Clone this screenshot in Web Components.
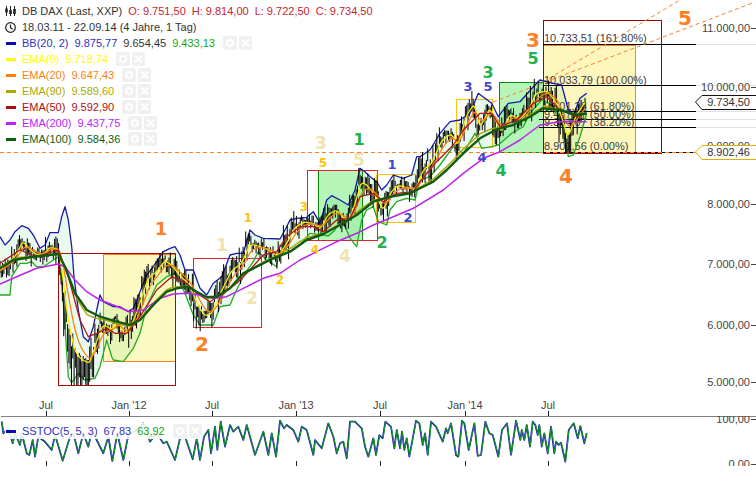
<!DOCTYPE html>
<html><head><meta charset="utf-8"><title>DB DAX</title>
<style>html,body{margin:0;background:#fff}</style></head><body>
<stock-chart></stock-chart>
<script>
const FONT='"Liberation Sans",Arial,sans-serif';
const T=(ox,oy,a)=>{const o=[];for(let i=0;i<a.length;i+=2)o.push([ox+a[i]/3,oy+a[i+1]/3]);return o};
const resample=(p,s)=>{const o=[];let j=0;for(let x=p[0][0];x<=p[p.length-1][0];x+=s){while(j<p.length-2&&p[j+1][0]<x)j++;const a=p[j],b=p[j+1],t=(x-a[0])/((b[0]-a[0])||1);o.push([x,a[1]+(b[1]-a[1])*t])}return o};
const ema=(p,n)=>{const k=2/(n+1);let v=p[0][1];return p.map(q=>{v=q[1]*k+v*(1-k);return[q[0],v]})};
const d=p=>'M'+p.map(q=>q[0].toFixed(1)+' '+q[1].toFixed(1)).join('L');

const price=[...T(0,160,[0,330,20,305,40,290,65,240,85,270,105,285,125,285,145,260,175,270,185,370,200,490,220,580,240,600,265,610,285,540,305,490,330,510,350,480,370,530,400,470,420,410,440,350,465,335,490,300,515,320,535,350,560,370,590,440,610,470,630,460,660,390,690,330,720,310,745,250,775,260,800,270,830,290]),
...T(280,130,[20,330,40,290,70,275,90,280,120,295,140,250,165,240,200,280,220,220,240,150,260,170,290,210,305,245,330,180,350,165,380,175,405,175,425,115]),
...T(420,70,[0,300,30,280,60,210,90,190,110,230,135,130,160,100,175,180,205,110,225,160,240,190,265,130,295,150,325,110,345,65,380,65,410,110,440,210,460,140,480,110,495,90])];
const upper=[...T(0,160,[0,230,15,255,30,240,45,215,65,197,85,205,100,225,120,265,135,255,150,218,175,218,185,170,195,140,205,180,215,260,222,350,235,450,250,530,265,545,280,500,290,450,300,405,310,425,340,440,360,440,385,455,400,445,420,395,440,345,460,320,490,275,510,265,525,260,540,285,555,330,580,330,600,385,620,405,640,370,665,350,690,285,710,280,730,280,750,210,765,225,790,235,840,237]),
...T(280,130,[15,300,30,270,50,265,80,262,100,245,120,280,140,210,155,197,180,210,205,225,225,180,240,115,255,125,270,140,290,155,305,180,320,165,340,135,370,145,395,135,410,80]),
...T(420,70,[0,260,30,240,60,190,90,155,120,150,150,130,175,70,195,85,215,100,235,140,265,100,300,95,345,45,360,30,400,40,425,45,445,120,460,135,480,85,500,70])];
const lower=[...T(0,160,[0,405,30,405,35,350,60,310,80,310,95,305,110,320,130,320,175,290,185,370,195,500,205,650,215,668,235,640,255,660,285,655,300,620,320,540,335,590,340,600,370,605,400,565,420,520,440,440,470,375,500,350,525,340,555,400,580,465,600,495,640,495,660,440,690,435,705,400,735,340,760,305,775,275,800,300,830,320]),
...T(280,130,[0,345,30,365,60,345,90,310,130,315,145,318,165,300,185,265,210,325,230,350,245,270,260,240,280,230,295,275,320,285,330,240,350,215,380,205,405,210]),
...T(420,70,[0,330,30,320,60,285,100,230,130,250,165,190,185,235,215,230,235,225,275,190,310,170,330,130,365,90,395,105,425,160,445,260,460,255,480,200,500,130])];
const e100=[...T(0,160,[0,325,40,300,100,290,175,282,195,320,225,400,260,450,300,470,350,485,390,495,420,480,460,435,500,395,530,385,565,380,590,395,620,412,650,410,690,385,730,340,770,320,820,295]),
...T(280,130,[30,365,80,330,130,312,180,285,230,255,280,215,330,200,390,190]),
...T(420,70,[0,355,40,335,80,300,130,250,180,205,230,178,280,165,330,140,370,115,420,120,470,135,500,130])];
const e200=[...T(0,160,[0,372,50,350,110,325,175,312,195,320,225,360,260,395,300,420,340,435,390,455,430,450,480,415,520,402,560,400,600,405,640,415,680,410,730,385,790,355,840,340]),
...T(280,130,[60,390,110,365,170,335,230,310,280,285,340,260,400,235]),
...T(420,70,[70,360,130,310,190,265,240,245,300,210,360,165,420,155,500,155])];
const e50=[...T(0,160,[0,310,60,270,110,290,175,270,205,350,240,480,265,530,290,520,320,505,345,520,380,520,420,470,470,390,515,350,560,370,590,400,630,425,670,400,710,370,740,340,790,285,830,275]),
...T(280,130,[20,320,60,290,100,290,130,305,170,270,210,265,240,200,280,190,310,215,350,190,400,185]),
...T(420,70,[0,335,50,275,100,225,130,180,180,130,215,130,240,170,290,150,340,100,380,80,420,120,470,140,500,130])];
const P=resample(price,.65), E9=ema(P,7), E20=ema(P,20);
const R50=resample(e50,.65), R100=resample(e100,.65);
const E90=R100.map((q,i)=>[q[0],q[1]*.82+(R50[Math.min(i,R50.length-1)]||q)[1]*.18]);

let seed=7;const rnd=()=>{seed=(seed*16807)%2147483647;return seed/2147483647};
let cand='';
for(let i=0;i<P.length;i+=2){const x=P[i][0];
 const sl=Math.abs(P[Math.min(i+8,P.length-1)][1]-P[Math.max(i-8,0)][1]);
 const amp=4+Math.min(sl*.35,7);
 let c=P[i][1]+(rnd()-.5)*amp*1.8;
 let dn=amp*(.3+rnd()*1.2), up=amp*(.3+rnd());
 if(x>62&&x<95)dn+=rnd()*16+4;
 if(x>560&&x<572)dn+=rnd()*10+3;
 if(rnd()<.12)dn+=rnd()*8;
 let bot=c+dn;
 if(x>58&&x<100)bot=Math.min(bot,385);
 if(x>555&&x<575)bot=Math.min(bot,153);
 cand+=`M${x.toFixed(1)} ${(c-up).toFixed(1)}V${bot.toFixed(1)}`;}

const line=(p,c,w=1.3)=>`<path d="${d(p)}" fill="none" stroke="${c}" stroke-width="${w}" stroke-linejoin="round"/>`;
const rect=(x,y,x2,y2,s,f='none',sw=1)=>`<rect x="${x}" y="${y}" width="${x2-x}" height="${y2-y}" fill="${f}" stroke="${s}" stroke-width="${sw}"/>`;
const OR='#ff7f27',BG='#efe4b0',YL='#ffc20e',GR='#22b14c',BL='#3f48cc';
const waves=[[161,235,'1',OR,18],[202,351,'2',OR,20],[533,47,'3',OR,20],[566,183,'4',OR,20],[685,25,'5',OR,20],
[222,251,'1',BG,17],[252,304,'2',BG,17],[321,149,'3',BG,17],[345,262,'4',BG,17],[359,166,'5',BG,17],
[248,222,'1',YL,12],[280,284,'2',YL,12],[304,211,'3',YL,12],[315,254,'4',YL,12],[323,167,'5',YL,12],
[359,145,'1',GR,16],[382,248,'2',GR,16],[488,78,'3',GR,16],[501,176,'4',GR,16],[533,64,'5',GR,16],
[392,169,'1',BL,13],[408,222,'2',BL,13],[468,91,'3',BL,13],[482,162,'4',BL,13],[488,91,'5',BL,13]];
const fib=[[544,42,'10.733,51 (161.80%)'],[544,84,'10.033,79 (100.00%)'],[544,110,'9.601,28 (61.80%)'],[544,118,'9.467,67 (50.00%)'],[544,126,'9.334,07 (38.20%)'],[544,150,'8.901,56 (0.00%)']];
const yax=[['11.000,00',28],['10.000,00',87],['9.000,00',146],['8.000,00',204],['7.000,00',264],['6.000,00',325],['5.000,00',382]];
const xax=[[46,'Jul'],[129,"Jan '12"],[212,'Jul'],[296,"Jan '13"],[380,'Jul'],[465,"Jan '14"],[548,'Jul']];
const tag=(y,c,t)=>`<path d="M695.5 ${y}L702 ${y-6.5}H757V${y+7.5}H702Z" fill="#fff" stroke="${c}"/><text x="750" y="${y+4}" text-anchor="end" fill="#333" font-size="11">${t}</text>`;

class PricePane extends HTMLElement{constructor(){super();this.attachShadow({mode:'open'}).innerHTML=`
<style>:host{display:block;position:relative;height:416px;overflow:hidden}svg{display:block;font-family:${FONT}}
.legend{position:absolute;left:5px;top:3px}</style>
<svg width="756" height="416" viewBox="0 0 756 416">
${rect(103.5,254.5,175.5,361.5,OR,'#fdf9c2')}
${rect(499.5,82.5,543.5,152.5,'#0a8a0a','#b5f5b8')}
${rect(318.5,170.5,362.5,240.5,'#0a8a0a','#b5f5b8')}
${rect(543.5,45.5,635.5,152.5,OR,'#fdf6bd')}
${rect(58.5,253.5,175.5,385.5,'#aa0808')}
${rect(193.5,258.5,261.5,327.5,'#e3202c')}
${rect(307.5,170.5,377.5,240.5,'#e3202c')}
${rect(376.5,174.5,415.5,222.5,YL)}
${rect(456.5,99.5,492.5,147.5,YL)}
${rect(543.5,20.5,661.5,153.5,'#a00000')}
${[44.5,85.5,111.5,119.5,127.5,152.5].map(y=>`<line x1="${y>105&&y<130?539:543}" x2="696" y1="${y}" y2="${y}" stroke="#000"/><line x1="696" x2="756" y1="${y}" y2="${y}" stroke="#e2e2e2"/>`).join('')}
<line x1="0" x2="696" y1="152.5" y2="152.5" stroke="${OR}" stroke-dasharray="4 3"/>
<line x1="493" y1="102" x2="755" y2="2" stroke="${OR}" stroke-dasharray="4 3"/>
<line x1="543" y1="82" x2="680" y2="0" stroke="${OR}" stroke-dasharray="4 3"/>
<g font-size="11" fill="#3c3c3c">${fib.map(f=>`<text x="${f[0]}" y="${f[1]}">${f[2]}</text>`).join('')}</g>
<path d="${d(upper)}L${[...lower].reverse().map(q=>q[0].toFixed(1)+' '+q[1].toFixed(1)).join('L')}Z" fill="rgba(0,200,60,.09)"/>
${line(upper,'#1a1aaa')}${line(lower,'#22aa22')}
<path d="${cand}" stroke="#000" stroke-width="1" fill="none"/>
${line(E9,'#ffee00')}${line(E20,'#ff7f11')}${line(E90,'#a8a800',1.4)}${line(e50,'#b01818')}${line(e200,'#bb22ee',1.5)}${line(e100,'#105a10',2.4)}
<g font-family="'DejaVu Sans',sans-serif" font-weight="700" text-anchor="middle">${waves.map(w=>`<text x="${w[0]}" y="${w[1]}" fill="${w[3]}" font-size="${w[4]}">${w[2]}</text>`).join('')}</g>
<g font-size="11" fill="#444" text-anchor="end">${yax.map(a=>`<text x="750" y="${a[1]+4}">${a[0]}</text><line x1="751" x2="756" y1="${a[1]+.5}" y2="${a[1]+.5}" stroke="#444"/>`).join('')}</g>
<g font-size="11">${tag(102,'#111','9.734,50')}${tag(152,'#e0b000','8.902,46')}</g>
<g font-size="11" fill="#444" text-anchor="middle">${xax.map(a=>`<text x="${a[0]}" y="409">${a[1]}</text><line x1="${a[0]+.5}" x2="${a[0]+.5}" y1="411" y2="416" stroke="#222"/>`).join('')}</g>
</svg><div class="legend"><slot></slot></div>`}}

const OZ=[...T(0,390,[5,95,10,130,25,115,38,160,45,130,60,165,65,130,80,190,88,195,98,150,105,200,115,140,135,155,155,180,165,135,188,212,210,140,220,130,235,190,250,130,265,170,275,125,290,150,310,190,325,140,337,213,352,130,370,210,385,135,410,120,430,100,450,155,470,130,490,160,500,155,525,210,540,145,555,140,578,208,590,145,600,210,612,140,625,120,633,190,645,110,652,180,662,95,675,170,690,105,700,125,715,110,730,150,740,105,765,195,790,125,805,195,815,130,828,200,840,92,852,115,860,105,880,120,895,155,905,110,920,120,940,195,945,150,965,175,985,100,1000,140,1010,190,1020,160,1030,155,1040,205,1050,95,1065,95,1085,115,1095,170,1105,200,1120,145]),
...T(376,390,[0,195,10,135,20,145,28,95,45,110,55,175,62,120,72,175,78,125,85,180,92,145,100,200,120,92,130,100,140,165,147,130,155,195,165,95,180,110,200,155,210,115,215,130,225,100,240,195,247,200,258,92,265,100,278,180,295,100,305,198,315,195,328,95,340,130,350,135,367,200,378,120,393,100,405,195,420,92,433,150,437,120,445,150,452,105,462,170,470,95,478,105,485,135,490,105,497,170,505,130,515,190,525,110,535,190,540,155,548,165,555,158,568,215,578,120,593,100,605,145,613,108,625,160,632,130])];
const O=OZ.map(q=>[q[0],q[1]-416]);
class OscPane extends HTMLElement{constructor(){super();this.attachShadow({mode:'open'}).innerHTML=`
<style>:host{display:block;position:relative;height:50px;overflow:hidden;font-family:${FONT}}svg{display:block;font-family:${FONT};overflow:hidden}
.legend{position:absolute;left:5px;top:7px;background:rgba(255,255,255,.88)}</style>
<svg width="756" height="50" viewBox="0 0 756 50">
<line x1="1" x2="756" y1=".5" y2=".5" stroke="#808080"/>
<path d="${d(O)}" fill="none" stroke="#2020b8" stroke-width="1.7" stroke-linejoin="round"/>
<path d="${d(O.map(q=>[q[0]+.3,q[1]-.3]))}" fill="none" stroke="#12a012" stroke-width="1" stroke-linejoin="round"/>
${xax.map(a=>`<line x1="${a[0]+.5}" x2="${a[0]+.5}" y1="45" y2="50" stroke="#222"/>`).join('')}
<g font-size="11" fill="#444" text-anchor="end"><text x="750" y="7">100,00</text><text x="750" y="52">0,00</text></g>
<line x1="751" x2="756" y1="3.5" y2="3.5" stroke="#444"/><line x1="751" x2="756" y1="48.5" y2="48.5" stroke="#444"/>
</svg><div class="legend"><slot></slot></div>`}}

class ChartLegend extends HTMLElement{constructor(){super();this.attachShadow({mode:'open'}).innerHTML=`
<style>:host{display:flex;flex-direction:column;font:11px ${FONT}}</style><slot></slot>`}}

class LegendRow extends HTMLElement{constructor(){super();const c=this.getAttribute('color');const ic=this.getAttribute('icon');
 const icons={candle:`<svg width="11" height="10" viewBox="0 0 11 10" fill="#222"><path d="M1.5 0V10M5.5 0V10M9.5 0V10" stroke="#222" stroke-width="1"/><rect x=".2" y="2.5" width="2.6" height="4"/><rect x="4.2" y="4" width="2.6" height="4"/><rect x="8.2" y="3" width="2.6" height="5"/></svg>`,
 clock:`<svg width="11" height="11" viewBox="0 0 11 11" fill="none" stroke="#222" stroke-width="1.2"><circle cx="5.5" cy="5.5" r="4.8"/><path d="M5.5 2.5V5.7L7.8 7.3"/></svg>`};
 const mk=ic?icons[ic]:`<span class="m"></span>`;
 this.attachShadow({mode:'open'}).innerHTML=`
<style>:host{display:flex;align-items:center;gap:6px;height:16px;white-space:nowrap;color:${c||'#333'}}
.i{width:11px;display:flex;align-items:center;justify-content:center;flex:none}.m{display:block;width:10px;height:3px;background:${c}}</style>
<span class="i">${mk}</span><slot></slot>`}}

class LegendActions extends HTMLElement{constructor(){super();this.attachShadow({mode:'open'}).innerHTML=`
<style>:host{display:flex;gap:2px;margin-left:2px}svg{display:block;background:#f0f0f0;border-radius:2px}</style>
<svg width="14" height="14" viewBox="0 0 14 14"><circle cx="7" cy="7" r="3" fill="none" stroke="#fff" stroke-width="2"/></svg>
<svg width="13" height="14" viewBox="0 0 13 14"><path d="M3 3.5L10 10.5M10 3.5L3 10.5" stroke="#fff" stroke-width="2"/></svg>`}}

class StockChart extends HTMLElement{constructor(){super();
 const r=(c,l,v)=>`<legend-row color="${c}"><span>${l}</span><span>${v}</span><legend-actions></legend-actions></legend-row>`;
 this.attachShadow({mode:'open'}).innerHTML=`
<style>:host{display:flex;flex-direction:column;width:756px;height:487px;background:#fff;overflow:hidden}.rest{flex:1;position:relative}</style>
<price-pane><chart-legend>
<legend-row icon="candle" color="#333"><span>DB DAX (Last, XXP)</span><span style="color:#c8242c">O: 9.751,50</span><span style="color:#c8242c">H: 9.814,00</span><span style="color:#c8242c">L: 9.722,50</span><span style="color:#c8242c">C: 9.734,50</span></legend-row>
<legend-row icon="clock" color="#333"><span>18.03.11 - 22.09.14 (4 Jahre, 1 Tag)</span></legend-row>
<legend-row color="#0a0ab4"><span style="color:#3030c0">BB(20, 2)</span><span style="color:#3030c0">9.875,77</span><span style="color:#333">9.654,45</span><span style="color:#12a812">9.433,13</span><legend-actions></legend-actions></legend-row>
${r('#ffff00','EMA(9)','9.718,74')}${r('#ff7f11','EMA(20)','9.647,43')}${r('#aaaa00','EMA(90)','9.589,60')}${r('#aa1010','EMA(50)','9.592,90')}${r('#bb22ff','EMA(200)','9.437,75')}${r('#0f5f0f','EMA(100)','9.584,36')}
</chart-legend></price-pane>
<osc-pane><chart-legend>
<legend-row color="#0a0ab4"><span style="color:#3030c0">SSTOC(5, 5, 3)</span><span style="color:#3030c0">67,83</span><span style="color:#12a812">63,92</span><legend-actions></legend-actions></legend-row>
</chart-legend></osc-pane><div class="rest"></div>`}}

customElements.define('legend-actions',LegendActions);
customElements.define('legend-row',LegendRow);
customElements.define('chart-legend',ChartLegend);
customElements.define('price-pane',PricePane);
customElements.define('osc-pane',OscPane);
customElements.define('stock-chart',StockChart);
</script></body></html>
